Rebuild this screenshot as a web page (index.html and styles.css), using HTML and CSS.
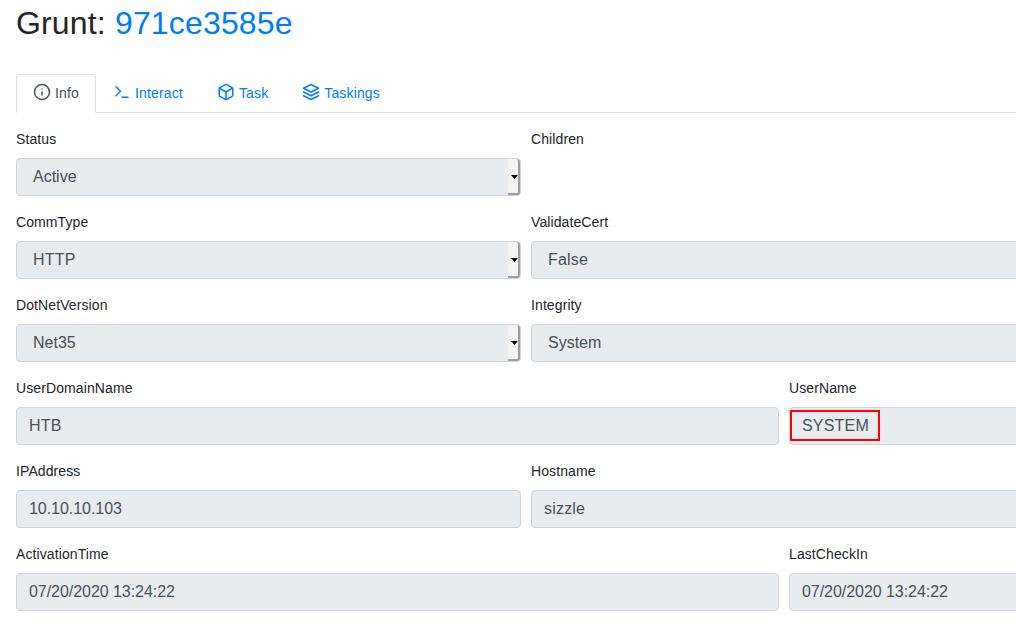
FILE: index.html
```
<!DOCTYPE html>
<html lang="en">
<head>
<meta charset="utf-8">
<title>Grunt: 971ce3585e</title>
<link rel="stylesheet" href="styles.css">
</head>
<body>
<main class="page">
  <h1 class="title">Grunt: <a class="link">971ce3585e</a></h1>
  <nav class="tabs">
    <a class="tab active"><svg class="icon" viewBox="0 0 24 24"><circle cx="12" cy="12" r="10"/><path d="M12 16v-4M12 8h.01"/></svg>Info</a>
    <a class="tab"><svg class="icon" viewBox="0 0 24 24"><path d="M4 17l6-6-6-6M12 19h8"/></svg>Interact</a>
    <a class="tab"><svg class="icon" viewBox="0 0 24 24"><path d="M21 16V8a2 2 0 0 0-1-1.73l-7-4a2 2 0 0 0-2 0l-7 4A2 2 0 0 0 3 8v8a2 2 0 0 0 1 1.73l7 4a2 2 0 0 0 2 0l7-4A2 2 0 0 0 21 16z"/><path d="M3.27 6.96L12 12.01l8.73-5.05M12 22.08V12"/></svg>Task</a>
    <a class="tab"><svg class="icon" viewBox="0 0 24 24"><path d="M12 2L2 7l10 5 10-5-10-5zM2 17l10 5 10-5M2 12l10 5 10-5"/></svg>Taskings</a>
  </nav>
  <form class="form">
    <div class="row half">
      <div class="field"><label>Status</label><div class="control select">Active<span class="arrow"></span></div></div>
      <div class="field"><label>Children</label></div>
    </div>
    <div class="row half">
      <div class="field"><label>CommType</label><div class="control text select">HTTP<span class="arrow"></span></div></div>
      <div class="field"><label>ValidateCert</label><div class="control text select">False</div></div>
    </div>
    <div class="row half">
      <div class="field"><label>DotNetVersion</label><div class="control select">Net35<span class="arrow"></span></div></div>
      <div class="field"><label>Integrity</label><div class="control select">System</div></div>
    </div>
    <div class="row wide">
      <div class="field"><label>UserDomainName</label><div class="control text">HTB</div></div>
      <div class="field"><label>UserName</label><div class="control text">SYSTEM<span class="highlight"></span></div></div>
    </div>
    <div class="row half">
      <div class="field"><label>IPAddress</label><div class="control numeric">10.10.10.103</div></div>
      <div class="field"><label>Hostname</label><div class="control text">sizzle</div></div>
    </div>
    <div class="row wide">
      <div class="field"><label>ActivationTime</label><div class="control numeric">07/20/2020 13:24:22</div></div>
      <div class="field"><label>LastCheckIn</label><div class="control numeric">07/20/2020 13:24:22</div></div>
    </div>
  </form>
</main>
</body>
</html>
```
FILE: styles.css
```
* { box-sizing: border-box; }
body {
  margin: 0;
  overflow: hidden;
  background: #fff;
  color: #212529;
  font: 14px/21px "Liberation Sans", Arial, sans-serif;
}
.page { width: 1052px; padding: 4px 16px 0; }
.title {
  margin: 0;
  font-size: 32px;
  line-height: 38px;
  font-weight: 400;
  letter-spacing: 0.16px;
}
.link { color: #007bff; }
.tabs {
  display: flex;
  height: 39px;
  margin-top: 32px;
  border-bottom: 1px solid #dee2e6;
}
.tab {
  display: flex;
  align-items: center;
  height: 39px;
  padding: 0 17px;
  color: #007bff;
  letter-spacing: 0.15px;
}
.tab.active {
  width: 80px;
  padding: 0 16px;
  border: 1px solid #dee2e6;
  border-bottom-color: #fff;
  border-radius: 4px 4px 0 0;
  background: #fff;
  color: #495057;
}
.icon {
  flex: none;
  width: 18px;
  height: 18px;
  margin: 0 4px 3px 0;
  fill: none;
  stroke: currentColor;
  stroke-width: 2;
  stroke-linecap: round;
  stroke-linejoin: round;
}
.form { padding-top: 16px; }
.row { display: grid; column-gap: 10px; height: 83px; }
.half { grid-template-columns: 505px 505px; }
.wide { grid-template-columns: 763px 247px; }
label { display: block; height: 29px; letter-spacing: 0.1px; }
.control {
  position: relative;
  height: 38px;
  padding: 6px 12px;
  border: 1px solid #ced4da;
  border-radius: 4px;
  background: #e9ecef;
  color: #495057;
  font-size: 16px;
  line-height: 24px;
}
.text { letter-spacing: 0.2px; }
.select { padding-left: 16px; }
.numeric { letter-spacing: -0.05px; }
.arrow {
  position: absolute;
  top: 0;
  right: 0;
  width: 12px;
  height: 36px;
  border-right: 2px solid #a09d9b;
  border-bottom: 2px solid #a09d9b;
  border-radius: 0 3px 3px 0;
  background: #f5f4f2;
}
.arrow::after {
  content: "";
  position: absolute;
  left: 3px;
  top: 16px;
  width: 7px;
  height: 4px;
  background: #000;
  clip-path: polygon(0 0, 100% 0, 50% 100%);
}
.highlight {
  position: absolute;
  left: 0;
  top: 2px;
  width: 90px;
  height: 31px;
  border: 2px solid #f00;
}
```
